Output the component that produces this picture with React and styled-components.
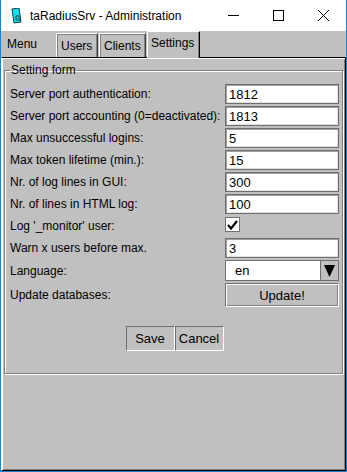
import styled, { createGlobalStyle } from "styled-components";

const GlobalStyle = createGlobalStyle`
  html, body {
    margin: 0;
    padding: 0;
    background: #ffffff;
  }
`;

// Fenêtre
const Window = styled.div`
  width: 347px;
  height: 472px;
  box-sizing: border-box;
  border: 1px solid #1883d7;
  border-top: none;
  display: flex;
  flex-direction: column;
  font-family: "Liberation Sans", Arial, sans-serif;
  font-size: 12px;
  color: #000;
  overflow: hidden;
`;

const TitleBar = styled.div`
  height: 31px;
  flex-shrink: 0;
  background: #fff;
  display: flex;
  align-items: center;
`;

const AppIcon = styled.svg`
  margin-left: 10px;
  margin-right: 7px;
  margin-top: 1px;
`;

const TitleText = styled.span`
  font-family: "Liberation Sans", Arial, sans-serif;
  font-size: 12px;
  color: #000;
  flex: 1;
  margin-top: 1px;
`;

const Control = styled.div`
  width: 45px;
  height: 31px;
  display: flex;
  align-items: center;
  justify-content: center;
`;

const Body = styled.div`
  flex: 1;
  background: #c0c0c0;
  display: flex;
  flex-direction: column;
`;

const TabRow = styled.div`
  height: 26px;
  display: flex;
  align-items: flex-end;
  position: relative;
  z-index: 1;
`;

const MenuLabel = styled.div`
  width: 55px;
  height: 24px;
  line-height: 23px;
  padding-left: 6px;
  box-sizing: border-box;
`;

const Tab = styled.div`
  box-sizing: border-box;
  width: ${(p) => p.$w}px;
  height: ${(p) => (p.$active ? 27 : 24)}px;
  margin-bottom: ${(p) => (p.$active ? -1 : 0)}px;
  border-top: 1px solid #fff;
  border-left: 1px solid #fff;
  border-right: 1px solid ${(p) => (p.$active ? "#000" : "#404040")};
  box-shadow: ${(p) =>
    p.$active ? "inset -1px 0 0 #808080" : "inset 1px 1px 0 #808080, inset -1px 0 0 #808080"};
  background: #c0c0c0;
  padding-left: ${(p) => p.$pl}px;
  line-height: ${(p) => (p.$active ? 23 : 24)}px;
  margin-right: 1px;
`;

const Panel = styled.div`
  flex: 1;
  border-top: 1px solid #000;
  border-left: 1px solid #fff;
  border-right: 1px solid #000;
  border-bottom: 1px solid #000;
  box-shadow: inset 1px 1px 0 #fff, inset -1px -1px 0 #808080;
  padding: 6px 2px 0 2px;
  display: flex;
  flex-direction: column;
`;

const Fieldset = styled.fieldset`
  margin: 0;
  padding: 4px 3px 22px 5px;
  border: 1px solid #808080;
  box-shadow: 1px 1px 0 #fff, inset 1px 1px 0 #fff;
  min-inline-size: 0;
`;

const Legend = styled.legend`
  padding: 0 1px;
  margin-left: 0;
  line-height: 13px;
`;

const Grid = styled.div`
  display: grid;
  grid-template-columns: 1fr 114px;
  row-gap: 2px;
  margin-top: 3px;
`;

const Label = styled.div`
  display: flex;
  align-items: center;
  height: ${(p) => p.$h || 20}px;
`;

const TextBox = styled.div`
  box-sizing: border-box;
  height: ${(p) => p.$h || 20}px;
  background: #fff;
  border: 1px solid #6f6f6f;
  box-shadow: inset 1px 1px 0 #a0a0a0, inset -1px -1px 0 #e0e0e0;
  padding-left: 3px;
  display: flex;
  align-items: center;
  font-size: 13px;
`;

const CheckCell = styled.div`
  height: 20px;
  display: flex;
  align-items: flex-start;
  padding-top: 1px;
  box-sizing: border-box;
`;

const CheckBox = styled.div`
  width: 15px;
  height: 15px;
  box-sizing: border-box;
  background: #fff;
  border: 1px solid #6f6f6f;
  display: flex;
  align-items: center;
  justify-content: center;
`;

const Select = styled.div`
  box-sizing: border-box;
  height: 21px;
  background: #fff;
  border: 1px solid #6f6f6f;
  display: flex;
`;

const SelectValue = styled.div`
  flex: 1;
  padding-left: 9px;
  display: flex;
  align-items: center;
  font-size: 13px;
`;

const SelectArrow = styled.div`
  width: 17px;
  background: #c0c0c0;
  border-left: 1px solid #6f6f6f;
  display: flex;
  align-items: center;
  justify-content: center;
`;

const Button = styled.div`
  box-sizing: border-box;
  height: ${(p) => p.$h || 24}px;
  width: ${(p) => (p.$w ? `${p.$w}px` : "auto")};
  background: #c0c0c0;
  border: 1px solid;
  border-color: #6f6f6f #fff #fff #6f6f6f;
  box-shadow: ${(p) => (p.$raised ? "inset 1px 1px 0 #fff, inset -1px -1px 0 #808080" : "none")};
  display: flex;
  align-items: center;
  justify-content: center;
  font-size: 13px;
`;

const ButtonRow = styled.div`
  display: flex;
  justify-content: center;
  margin-top: 19px;
`;

const rows = [
  ["Server port authentication:", "1812"],
  ["Server port accounting (0=deactivated):", "1813"],
  ["Max unsuccessful logins:", "5"],
  ["Max token lifetime (min.):", "15"],
  ["Nr. of log lines in GUI:", "300"],
  ["Nr. of lines in HTML log:", "100"],
];

function App() {
  return (
    <>
      <GlobalStyle />
      <Window>
        <TitleBar>
          <AppIcon width="12" height="16" viewBox="0 0 12 16">
            <polygon points="1,1 8,0 10,14 3,15" fill="#00e5f0" stroke="#1a3a4a" strokeWidth="1" />
            <path d="M8.5 8 L5 8 L5 12 L9.5 12 L9.5 10 L7 10" fill="none" stroke="#1a3a4a" strokeWidth="1" />
          </AppIcon>
          <TitleText>taRadiusSrv - Administration</TitleText>
          <Control>
            <svg width="11" height="11" viewBox="0 0 11 11">
              <line x1="0" y1="5.5" x2="11" y2="5.5" stroke="#000" strokeWidth="1" />
            </svg>
          </Control>
          <Control>
            <svg width="11" height="11" viewBox="0 0 11 11">
              <rect x="0.5" y="0.5" width="10" height="10" fill="none" stroke="#000" strokeWidth="1" />
            </svg>
          </Control>
          <Control>
            <svg width="11" height="11" viewBox="0 0 11 11">
              <path d="M0 0 L11 11 M11 0 L0 11" stroke="#000" strokeWidth="1" />
            </svg>
          </Control>
        </TitleBar>
        <Body>
          <TabRow>
            <MenuLabel>Menu</MenuLabel>
            <Tab $w={42} $pl={4}>Users</Tab>
            <Tab $w={47} $pl={4}>Clients</Tab>
            <Tab $w={53} $pl={3} $active>Settings</Tab>
          </TabRow>
          <Panel>
            <Fieldset>
              <Legend>Setting form</Legend>
              <Grid>
                {rows.map(([label, value]) => (
                  <>
                    <Label key={label}>{label}</Label>
                    <TextBox key={label + "v"}>{value}</TextBox>
                  </>
                ))}
                <Label>Log '_monitor' user:</Label>
                <CheckCell>
                  <CheckBox>
                    <svg width="11" height="10" viewBox="0 0 11 10">
                      <path d="M1 5 L4 8.5 L10 1" fill="none" stroke="#000" strokeWidth="2.2" />
                    </svg>
                  </CheckBox>
                </CheckCell>
                <Label>Warn x users before max.</Label>
                <TextBox>3</TextBox>
                <Label $h={21}>Language:</Label>
                <Select>
                  <SelectValue>en</SelectValue>
                  <SelectArrow>
                    <svg width="11" height="12" viewBox="0 0 11 12">
                      <polygon points="0,0 11,0 5.5,12" fill="#000" />
                    </svg>
                  </SelectArrow>
                </Select>
                <Label $h={24}>Update databases:</Label>
                <Button $raised>Update!</Button>
              </Grid>
              <ButtonRow>
                <Button $w={49} $h={25}>Save</Button>
                <Button $w={49} $h={25}>Cancel</Button>
              </ButtonRow>
            </Fieldset>
          </Panel>
        </Body>
      </Window>
    </>
  );
}

export default App;
